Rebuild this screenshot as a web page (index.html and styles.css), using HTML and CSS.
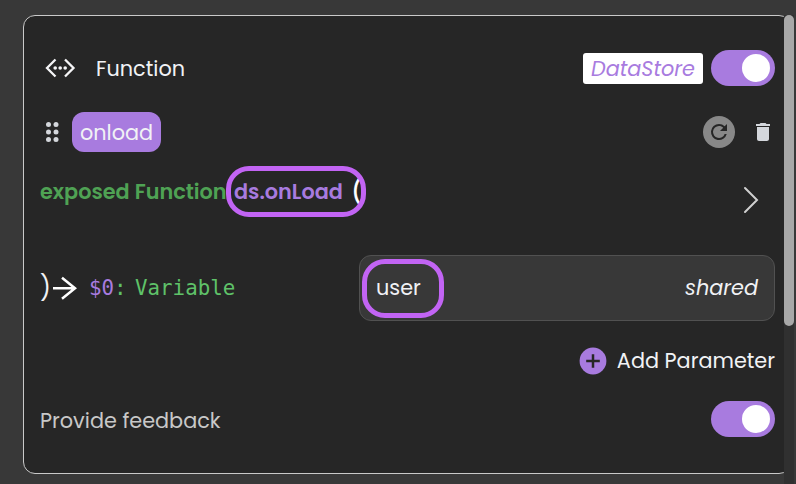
FILE: index.html
```html
<!DOCTYPE html>
<html lang="en">
<head>
<meta charset="utf-8">
<title>Function</title>
<link rel="stylesheet" href="styles.css">
</head>
<body>
<main class="panel">
  <header class="row head">
    <svg class="code-icon" width="32" height="20" viewBox="0 0 32 20" fill="none" stroke="#f5f5f7" stroke-width="2.300"><path d="M10.500 1.500 2 10l8.500 8.500M20 1.500 28.500 10 20 18.500"/><g fill="#f5f5f7" stroke="none"><circle cx="10.200" cy="10" r="1.800"/><circle cx="15.200" cy="10" r="1.800"/><circle cx="20.200" cy="10" r="1.800"/></g></svg>
    <span class="title">Function</span>
    <span class="tag"><i>DataStore</i></span>
    <span class="toggle"></span>
  </header>
  <section class="row event">
    <svg class="grip" width="16" height="22" viewBox="0 0 16 22" fill="#d4d7dc"><circle cx="4.500" cy="3.500" r="2.500"/><circle cx="12" cy="3.500" r="2.500"/><circle cx="4.500" cy="11" r="2.500"/><circle cx="12" cy="11" r="2.500"/><circle cx="4.500" cy="18.500" r="2.500"/><circle cx="12" cy="18.500" r="2.500"/></svg>
    <span class="chip">onload</span>
    <span class="refresh"><svg width="24" height="24" viewBox="0 0 24 24" fill="#262626"><path d="M17.650 6.350A7.960 7.960 0 0 0 12 4a8 8 0 1 0 7.730 10h-2.080A6 6 0 1 1 12 6c1.660 0 3.140.69 4.220 1.780L13 11h7V4z"/></svg></span>
    <svg class="trash" width="24" height="24" viewBox="0 0 24 24" fill="#d4d7dc"><path d="M6 19c0 1.100.9 2 2 2h8c1.100 0 2-.9 2-2V7H6zM19 4h-3.500l-1-1h-5l-1 1H5v2h14z"/></svg>
  </section>
  <section class="row signature">
    <span class="exposed">exposed Function</span>
    <span class="name">ds.onLoad</span>
    <span class="open">(</span>
    <svg class="chevron" width="16" height="28" viewBox="0 0 16 28" fill="none" stroke="#d0d0d0" stroke-width="2" stroke-linecap="round"><path d="m2 2 12 12L2 26"/></svg>
  </section>
  <section class="row param">
    <span class="close">)</span>
    <svg class="arrow" width="26" height="26" viewBox="0 0 26 26" fill="none" stroke="#fff" stroke-width="2.500"><path d="M1 13.300h22M10 2.800l13 10.500-13 10.500"/></svg>
    <span class="index">$0</span><span class="colon">:</span><span class="type">Variable</span>
    <div class="field"><span class="user">user</span><i class="shared">shared</i></div>
  </section>
  <section class="row add">
    <svg width="28" height="28" viewBox="0 0 28 28"><circle cx="14" cy="14" r="13.400" fill="#a87bdf"/><path d="M7.200 14h13.600M14 7.200v13.600" stroke="#262626" stroke-width="2.500"/></svg>
    <span class="add-label">Add Parameter</span>
  </section>
  <footer class="row feedback">
    <span class="feedback-label">Provide feedback</span>
    <span class="toggle"></span>
  </footer>
</main>
<div class="scrollbar"><div class="thumb"></div></div>
<div class="ring ring-name"></div>
<div class="ring ring-user"></div>
</body>
</html>
```
FILE: styles.css
```css
* { box-sizing: border-box; }
body {
  margin: 0;
  width: 796px;
  height: 484px;
  overflow: hidden;
  position: relative;
  background: #383838;
  color: #f1f2f5;
  font: 400 20.800px/30px Poppins, Inter, sans-serif;
  white-space: nowrap;
}
.panel {
  width: 768px;
  height: 459px;
  margin: 15px 0 0 23px;
  padding: 34px 15px 0 16px;
  border: 1px solid #c9c9c9;
  border-radius: 12px;
  background: #262626;
}
.row { display: flex; align-items: center; }
.head { height: 36px; }
.code-icon { margin-left: 5px; }
.title { margin-left: 19px; padding-top: 2px; }
.tag {
  width: 120px;
  height: 31px;
  margin-left: auto;
  border-radius: 3px;
  background: #fff;
  color: #a87bdf;
  line-height: 32px;
  text-align: center;
}
.toggle {
  width: 64px;
  height: 36px;
  margin-left: 8px;
  padding: 4px 5px;
  border-radius: 18px;
  background: #a87bdf;
}
.toggle::after {
  content: "";
  display: block;
  width: 28px;
  height: 28px;
  margin-left: auto;
  border-radius: 50%;
  background: #fff;
}
.event { height: 40px; margin-top: 26px; }
.grip { margin-left: 4px; }
.chip {
  width: 89px;
  height: 40px;
  margin-left: 12px;
  border-radius: 12px;
  background: #a87bdf;
  line-height: 41px;
  text-align: center;
}
.refresh {
  display: flex;
  align-items: center;
  justify-content: center;
  width: 32px;
  height: 32px;
  margin-left: auto;
  border-radius: 50%;
  background: #888;
}
.trash { margin-left: 16px; }
.signature { height: 48px; margin-top: 24px; align-items: flex-start; font-weight: 600; line-height: 32px; }
.exposed { width: 194px; color: #4fa254; }
.name { width: 117px; color: #a87bdf; }
.open { color: #fff; font-weight: 500; font-size: 24px; }
.chevron { margin: 10px 16px 0 auto; }
.param { height: 66px; margin-top: 31px; font: 400 20.800px/30px "DejaVu Sans Mono", monospace; }
.close { width: 11px; font: 400 24px/30px Poppins, Inter, sans-serif; }
.arrow { margin-left: 1px; }
.index { margin-left: 11px; color: #a87bdf; }
.colon { width: 21px; color: #5fc269; }
.type { color: #5fc269; }
.field {
  display: flex;
  align-items: center;
  justify-content: space-between;
  width: 416px;
  height: 66px;
  margin-left: auto;
  padding: 0 16px;
  border: 1px solid #515151;
  border-radius: 12px;
  background: #383838;
  font: 400 20.800px/30px Poppins, Inter, sans-serif;
}
.add { height: 30px; margin-top: 25px; justify-content: flex-end; }
.add-label { margin-left: 10px; }
.feedback { height: 36px; margin-top: 25px; justify-content: space-between; color: #c8c8c8; }
.feedback-label { padding-top: 3px; }
.scrollbar { position: absolute; top: 15px; left: 784px; width: 10px; height: 469px; background: #303030; }
.thumb { height: 311px; border-radius: 5px; background: #a8a8a8; }
.ring { position: absolute; border: 5px solid #c264f4; }
.ring-name { left: 226px; top: 166px; width: 140px; height: 51px; border-radius: 23px; }
.ring-user { left: 362px; top: 259px; width: 82px; height: 59px; border-radius: 23px; }
```
